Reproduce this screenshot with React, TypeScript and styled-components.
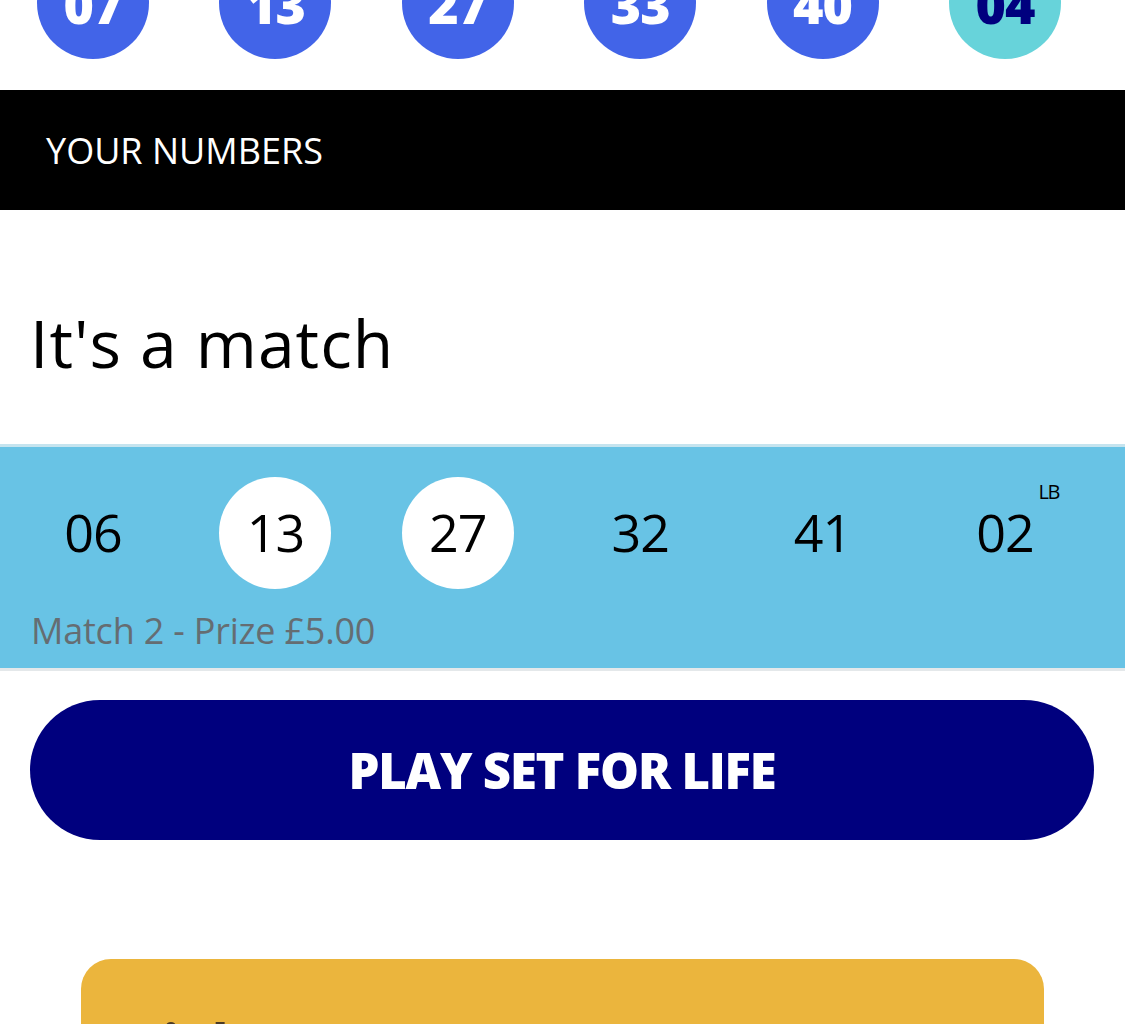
import React from "react";
import styled, { createGlobalStyle } from "styled-components";

const Global = createGlobalStyle`
  html, body { margin: 0; padding: 0; background: #ffffff; }
  body { font-family: "Open Sans", "Noto Sans", Arial, sans-serif; overflow: hidden; }
  * { box-sizing: border-box; }
`;

const Page = styled.div`
  width: 1125px;
  height: 1024px;
  overflow: hidden;
  background: #fff;
  display: flex;
  flex-direction: column;
`;

const BallRow = styled.div<{ $top?: boolean }>`
  display: flex;
  align-items: ${(p) => (p.$top ? "flex-end" : "center")};
  gap: 70.4px;
  padding-left: 37px;
  height: ${(p) => (p.$top ? "90px" : "112px")};
  padding-bottom: ${(p) => (p.$top ? "31px" : "0")};
  overflow: ${(p) => (p.$top ? "hidden" : "visible")};
  flex-shrink: 0;
`;

const DrawBall = styled.div<{ $bonus?: boolean }>`
  width: 112px;
  height: 112px;
  flex-shrink: 0;
  border-radius: 50%;
  background: ${(p) => (p.$bonus ? "#67d3da" : "#4264e8")};
  color: ${(p) => (p.$bonus ? "#00007e" : "#ffffff")};
  display: flex;
  align-items: center;
  justify-content: center;
  font-size: 52px;
  font-weight: 800;
  letter-spacing: -1px;
`;

const HeaderBar = styled.div`
  height: 120px;
  background: #000;
  color: #fff;
  display: flex;
  align-items: center;
  padding-left: 46px;
  font-size: 36px;
  font-weight: 400;
  flex-shrink: 0;
`;

const TitleArea = styled.div`
  height: 234px;
  display: flex;
  align-items: center;
  padding: 30px 0 0 30px;
  flex-shrink: 0;
`;

const Title = styled.h1`
  margin: 0;
  font-size: 66px;
  font-weight: 400;
  color: #000;
  letter-spacing: 1px;
`;

const Band = styled.div`
  border-top: 3px solid #c5e4ef;
  border-bottom: 3px solid #e4e8ea;
  background: #68c3e5;
  padding-top: 30px;
  height: 227px;
  flex-shrink: 0;
`;

const NumCell = styled.div<{ $hit?: boolean }>`
  position: relative;
  width: 112px;
  height: 112px;
  flex-shrink: 0;
  border-radius: 50%;
  background: ${(p) => (p.$hit ? "#ffffff" : "transparent")};
  display: flex;
  align-items: center;
  justify-content: center;
  padding-bottom: 4px;
  font-size: 52px;
  font-weight: 400;
  color: #000;
  letter-spacing: -1px;
`;

const Sup = styled.span`
  position: absolute;
  top: 1px;
  right: 2px;
  font-size: 20px;
  letter-spacing: -1.5px;
`;

const Prize = styled.div`
  padding: 17px 0 0 31px;
  font-size: 36px;
  color: #656d72;
  letter-spacing: -0.2px;
`;

const PlayButton = styled.button`
  margin: 29px 31px 0 30px;
  height: 140px;
  border: none;
  border-radius: 70px;
  background: #00007e;
  color: #fff;
  font-family: "Open Sans", Arial, sans-serif;
  font-size: 49px;
  font-weight: 800;
  letter-spacing: -1.2px;
  flex-shrink: 0;
`;

const Card = styled.div`
  margin: 119px 81px 0 81px;
  background: #ebb53d;
  border-radius: 30px;
  padding: 45px 46px 40px;
  height: 300px;
  flex-shrink: 0;
`;

const CardTitle = styled.div`
  font-size: 60px;
  font-weight: 700;
  color: #4a3a28;
`;

const draw = ["07", "13", "27", "33", "40"];
const mine = [
  { n: "06", hit: false },
  { n: "13", hit: true },
  { n: "27", hit: true },
  { n: "32", hit: false },
  { n: "41", hit: false },
];

export default function App() {
  return (
    <Page>
      <Global />
      <BallRow $top>
        {draw.map((d) => (
          <DrawBall key={d}>{d}</DrawBall>
        ))}
        <DrawBall $bonus>04</DrawBall>
      </BallRow>
      <HeaderBar>YOUR NUMBERS</HeaderBar>
      <TitleArea>
        <Title>It's a match</Title>
      </TitleArea>
      <Band>
        <BallRow>
          {mine.map((m) => (
            <NumCell key={m.n} $hit={m.hit}>
              {m.n}
            </NumCell>
          ))}
          <NumCell>
            02<Sup>LB</Sup>
          </NumCell>
        </BallRow>
        <Prize>Match 2 - Prize £5.00</Prize>
      </Band>
      <PlayButton>PLAY SET FOR LIFE</PlayButton>
      <Card>
        <CardTitle>Tickets</CardTitle>
      </Card>
    </Page>
  );
}
